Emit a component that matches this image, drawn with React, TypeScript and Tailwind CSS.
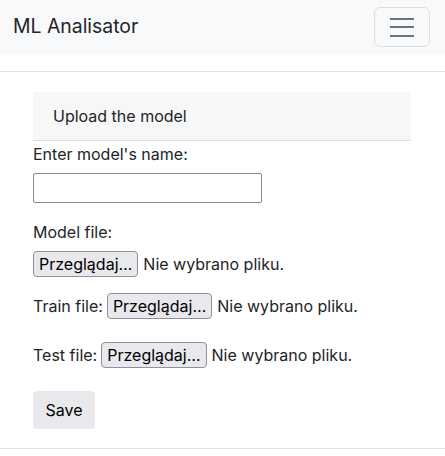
import React from "react";

function FileBtn() {
  return (
    <span className="inline-flex items-center">
      <span className="inline-flex items-center h-[26px] px-[5px] border border-[#8f8f9d] rounded-[4px] bg-[#e9e9ed] text-black leading-none">
        Przeglądaj…
      </span>
      <span className="ml-[5px]">Nie wybrano pliku.</span>
    </span>
  );
}

export default function App() {
  return (
    <div className="w-[445px] min-h-[456px] bg-white text-[16px] text-[#212529]" style={{ fontFamily: 'Inter, "Liberation Sans", Arial, sans-serif' }}>
      <nav className="h-[54px] bg-[#f8f9fa] flex items-center justify-between pl-[13px] pr-[15px]">
        <span className="text-[19.4px] text-[#212529]">ML Analisator</span>
        <button className="w-[56px] h-[40px] border border-[#dcdddf] rounded-[6px] flex flex-col items-center justify-center gap-[6.5px]">
          <span className="block w-[24px] h-[2px] bg-[#6e7175]" />
          <span className="block w-[24px] h-[2px] bg-[#6e7175]" />
          <span className="block w-[24px] h-[2px] bg-[#6e7175]" />
        </button>
      </nav>
      <div className="h-[17px]" />
      <div className="border-t border-[#dee2e6]" />
      <div className="px-[33px] pt-[20px]">
        <div className="w-[378px] h-[49px] bg-[#f7f7f7] border-b border-[#dcdcdc] flex items-center pl-[20px]">
          Upload the model
        </div>
        <div className="leading-[24px] mt-[1px]">Enter model's name:</div>
        <input className="mt-[7px] block w-[229px] h-[30px] border border-[#8a8a93] rounded-[2px]" />
        <div className="leading-[24px] mt-[17px]">Model file:</div>
        <div className="mt-[7px] h-[26px] flex items-center">
          <FileBtn />
        </div>
        <div className="mt-[16px] h-[26px] flex items-center">
          <span className="mr-[4px]">Train file:</span>
          <FileBtn />
        </div>
        <div className="mt-[23px] h-[26px] flex items-center">
          <span className="mr-[4px]">Test file:</span>
          <FileBtn />
        </div>
        <button className="mt-[23px] block h-[38px] w-[62px] rounded-[4px] bg-[#e9e9ed] text-black">Save</button>
      </div>
      <div className="mt-[19px] border-t border-[#dee2e6]" />
    </div>
  );
}
